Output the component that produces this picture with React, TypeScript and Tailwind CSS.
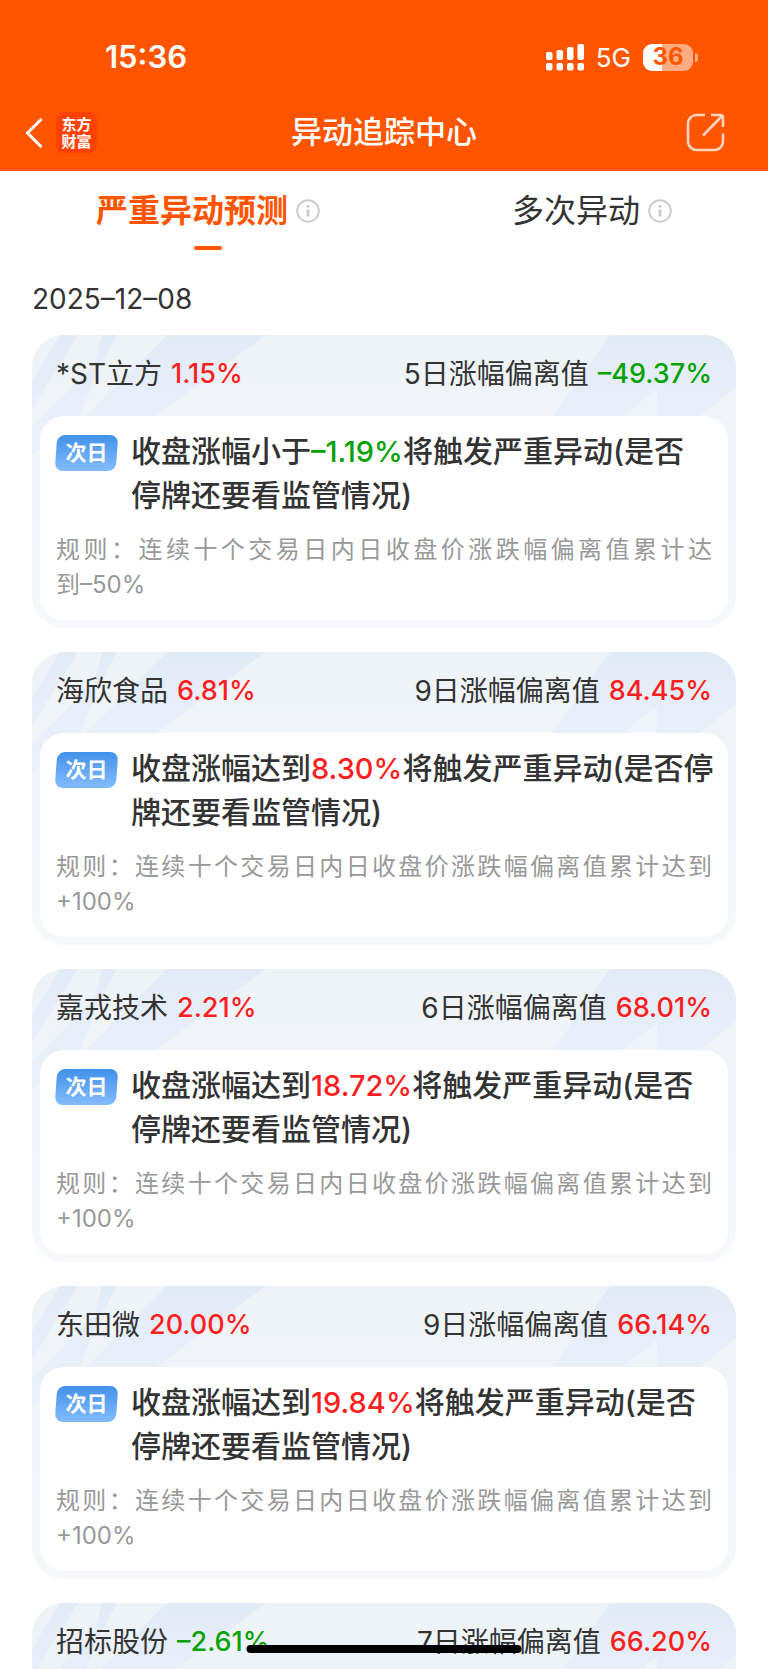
import type { ReactNode } from "react"

interface Stock {
  name: string
  change: string
  days: number
  deviation: string
  condition: string
  threshold: string
  result: string
  rule: string
}

// The joiner after the dash keeps "–50%" in one piece when the rule wraps
const stocks: Stock[] = [
  {
    name: "*ST立方",
    change: "1.15%",
    days: 5,
    deviation: "–49.37%",
    condition: "收盘涨幅小于",
    threshold: "–1.19%",
    result: "将触发严重异动(是否\n停牌还要看监管情况)",
    rule: "–\u206050%",
  },
  {
    name: "海欣食品",
    change: "6.81%",
    days: 9,
    deviation: "84.45%",
    condition: "收盘涨幅达到",
    threshold: "8.30%",
    result: "将触发严重异动(是否停\n牌还要看监管情况)",
    rule: "+100%",
  },
  {
    name: "嘉戎技术",
    change: "2.21%",
    days: 6,
    deviation: "68.01%",
    condition: "收盘涨幅达到",
    threshold: "18.72%",
    result: "将触发严重异动(是否\n停牌还要看监管情况)",
    rule: "+100%",
  },
  {
    name: "东田微",
    change: "20.00%",
    days: 9,
    deviation: "66.14%",
    condition: "收盘涨幅达到",
    threshold: "19.84%",
    result: "将触发严重异动(是否\n停牌还要看监管情况)",
    rule: "+100%",
  },
]

const lastStock = { name: "招标股份", change: "–2.61%", days: 7, deviation: "66.20%" }

function Percent({ value, size }: { value: string; size: string }) {
  const color = value.startsWith("–") ? "text-[#07a207]" : "text-[#fb1f22]"
  return <span className={`leading-none font-medium ${size} ${color}`}>{value}</span>
}

function StatusBar() {
  return (
    <div className="flex h-[94px] items-center justify-between pt-5 pr-[70px] pl-[105px]">
      <span className="text-[31px] font-semibold">15:36</span>
      <div className="flex items-center">
        <svg width="38" height="27" viewBox="0 0 38 27" fill="currentColor" aria-hidden="true">
          <rect x="0" y="8" width="6.5" height="8" rx="2" />
          <rect x="10.5" y="6" width="6.5" height="10" rx="2" />
          <rect x="21" y="3" width="6.5" height="13" rx="2" />
          <rect x="31.5" y="0" width="6.5" height="16" rx="2" />
          <rect x="0" y="19" width="6.5" height="7.5" rx="2" />
          <rect x="10.5" y="19" width="6.5" height="7.5" rx="2" />
          <rect x="21" y="19" width="6.5" height="7.5" rx="2" />
          <rect x="31.5" y="19" width="6.5" height="7.5" rx="2" />
        </svg>
        <span className="ml-3 text-[26px]">5G</span>
        <div className="ml-3 flex items-center gap-0.5">
          <div className="flex h-[27px] w-[50px] items-center justify-center rounded-[9px] bg-linear-to-r from-white from-37% to-[#ffac80] to-37% text-2xl font-bold text-[#ff5500]">
            36
          </div>
          <div className="h-[9px] w-[3px] rounded-r-full bg-[#ffac80]" />
        </div>
      </div>
    </div>
  )
}

function NavBar() {
  return (
    <div className="grid h-[77px] grid-cols-[1fr_auto_1fr] items-center px-[25px]">
      <div className="flex items-center gap-[13px]">
        <button type="button" aria-label="返回">
          <svg width="18" height="30" viewBox="0 0 18 30" fill="none" stroke="currentColor" strokeWidth="3" aria-hidden="true">
            <path d="M16.5 1 2.5 15l14 14" />
          </svg>
        </button>
        <div className="flex size-[41px] flex-col items-center justify-center rounded-lg bg-[#ff4203] text-[15px] leading-[17px] font-bold">
          <span>东方</span>
          <span>财富</span>
        </div>
      </div>
      <h1 className="text-[31px] font-medium">异动追踪中心</h1>
      <button type="button" aria-label="分享" className="mr-[18px] justify-self-end text-[#ffd3bd]">
        <svg width="39" height="39" viewBox="0 0 39 39" fill="none" stroke="currentColor" strokeWidth="2.6" aria-hidden="true">
          <path d="M19 2H10.5A8.5 8.5 0 0 0 2 10.5v18A8.5 8.5 0 0 0 10.5 37h18a8.5 8.5 0 0 0 8.5-8.5V20.5" />
          <path d="M25 2h9.5A2.5 2.5 0 0 1 37 4.5V14M36 3 17 22.5" />
        </svg>
      </button>
    </div>
  )
}

function InfoIcon() {
  return (
    <svg width="24" height="24" viewBox="0 0 24 24" fill="none" stroke="#cccccc" strokeWidth="2" aria-hidden="true">
      <circle cx="12" cy="12" r="10.8" />
      <path d="M12 10.5v7M12 6v2.6" strokeWidth="2.8" />
    </svg>
  )
}

function Tab({ active, children }: { active?: boolean; children: ReactNode }) {
  return (
    <button
      type="button"
      role="tab"
      aria-selected={!!active}
      className={`flex flex-1 flex-col items-center pl-8 ${active ? "font-bold text-[#ff5500]" : "text-[#333333]"}`}
    >
      <span className="flex items-center gap-2 text-[32px] leading-10">
        {children}
        <InfoIcon />
      </span>
      {active && <span className="mt-[15px] h-1 w-7 rounded-full bg-[#ff5500]" />}
    </button>
  )
}

function CardPattern() {
  return (
    <svg className="absolute inset-x-0 top-0 h-[120px] w-full" viewBox="0 0 704 120" preserveAspectRatio="none" aria-hidden="true">
      <defs>
        <linearGradient id="streak" gradientUnits="userSpaceOnUse" x1="0" y1="0" x2="0" y2="100">
          <stop offset="0" stopColor="#e1ebf6" />
          <stop offset="1" stopColor="#eaf1fb" />
        </linearGradient>
      </defs>
      <g fill="url(#streak)">
        <path d="M28 0h18L0 74V46z" />
        <path d="M70 0 62 30 0 92v28l48-39 18-46L85 0z" />
        <path d="M135 0h99L124 81H54z" />
        <path d="M578 0h126v52l-36 29H521z" />
      </g>
      <path d="M590 81 625 54v27z" fill="#eff4fa" />
    </svg>
  )
}

function CardHeader({ stock }: { stock: Pick<Stock, "name" | "change" | "days" | "deviation"> }) {
  return (
    <header className="relative flex h-[81px] items-center justify-between px-4 pb-1 text-[28px]">
      <h2 className="flex items-center gap-[9px]">
        {stock.name} <Percent value={stock.change} size="text-[27px]" />
      </h2>
      <p className="flex items-center gap-[9px]">
        {stock.days}日涨幅偏离值 <Percent value={stock.deviation} size="text-[27px]" />
      </p>
    </header>
  )
}

function StockCard({ stock }: { stock: Stock }) {
  return (
    <article className="relative shrink-0 overflow-hidden rounded-[32px] bg-linear-to-b from-[#eef3f8] to-[#f6f8fb] px-2 pb-2">
      <CardPattern />
      <CardHeader stock={stock} />
      <div className="relative rounded-3xl bg-white px-4 pt-[13px] pb-[18px]">
        <div className="flex items-start gap-[14px]">
          <div className="relative mt-1.5 flex h-9 w-[61px] shrink-0 items-center justify-center text-[21px] font-bold text-white">
            <span className="absolute inset-0 -skew-x-4 rounded-lg bg-linear-to-b from-[#4091e9] to-[#83bcfc]" />
            <span className="relative">次日</span>
          </div>
          <p className="text-[30px] leading-[44px] font-medium whitespace-pre">
            {stock.condition}
            <Percent value={stock.threshold} size="text-[29px]" />
            {stock.result}
          </p>
        </div>
        <p className="mt-[15px] text-justify text-2xl leading-[35px] text-[#999999]">
          规则：连续十个交易日内日收盘价涨跌幅偏离值累计达到{stock.rule}
        </p>
      </div>
    </article>
  )
}

export default function App() {
  return (
    <div
      lang="zh-CN"
      className="relative flex h-screen flex-col overflow-hidden bg-white font-[Inter,'Noto_Sans_CJK_SC',sans-serif] text-[#333333]"
    >
      <header className="shrink-0 bg-[#ff5500] text-white">
        <StatusBar />
        <NavBar />
      </header>

      <div role="tablist" className="flex h-[84px] shrink-0 items-start pt-5">
        <Tab active>严重异动预测</Tab>
        <Tab>多次异动</Tab>
      </div>

      <main className="flex min-h-0 flex-1 flex-col overflow-y-auto px-8 [scrollbar-width:none]">
        <time dateTime="2025-12-08" className="pt-7 pb-5 text-[28px] leading-8">
          2025–12–08
        </time>
        <div className="flex flex-col gap-6">
          {stocks.map((stock) => (
            <StockCard key={stock.name} stock={stock} />
          ))}
          <article className="relative h-[81px] shrink-0 overflow-hidden rounded-t-[32px] bg-[#eef3f8] px-2">
            <CardPattern />
            <CardHeader stock={lastStock} />
          </article>
        </div>
      </main>

      {/* Home indicator */}
      <div className="absolute bottom-4 left-1/2 h-2 w-[275px] -translate-x-1/2 rounded-full bg-black" />
    </div>
  )
}
